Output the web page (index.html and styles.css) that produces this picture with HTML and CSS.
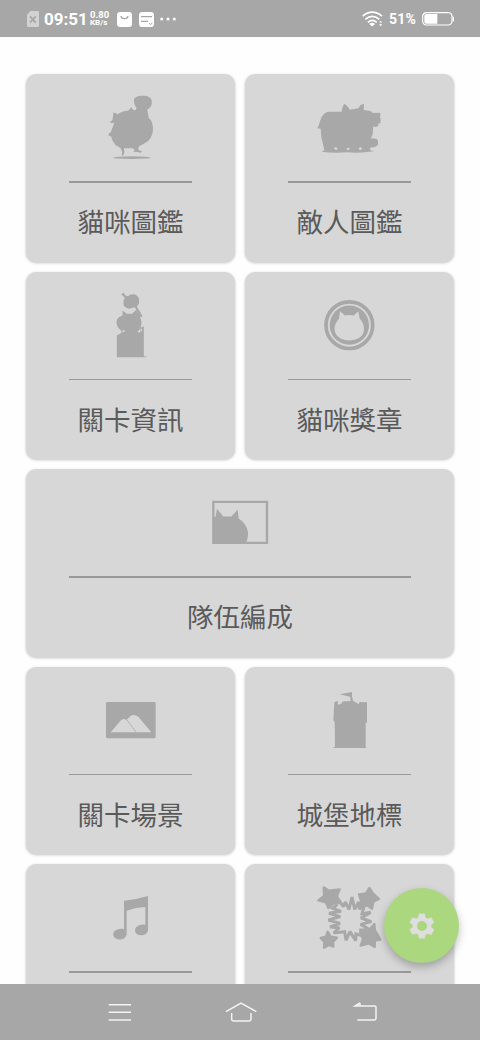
FILE: index.html
```html
<!DOCTYPE html>
<html lang="zh-Hant">
<head>
<meta charset="utf-8">
<title>貓咪圖鑑</title>
<link rel="stylesheet" href="styles.css">
</head>
<body>
<div class="phone">
  <header class="status">
    <svg class="sim" viewBox="0 0 36 48"><path d="M10 0H32Q36 0 36 4V44Q36 48 32 48H4Q0 48 0 44V11Z" fill="#d2d2d2"/><path d="M9 16L26 35M26 16L9 35" stroke="#a7a7a7" stroke-width="5"/></svg>
    <span class="time">09:51</span>
    <span class="rate"><span>0.80</span><span>KB/s</span></span>
    <svg class="bag" viewBox="0 0 45 45"><rect width="45" height="45" rx="9" fill="#fff"/><path d="M12 12Q13 20 22.500 20T33 12" fill="none" stroke="#a7a7a7" stroke-width="4"/></svg>
    <svg class="note" viewBox="0 0 45 45"><rect width="45" height="45" rx="10" fill="#fff"/><path d="M6 14H39M6 28H27" stroke="#a7a7a7" stroke-width="4"/><path d="M30 33L35 38L40 32" fill="none" stroke="#a7a7a7" stroke-width="3"/></svg>
    <svg class="dots" viewBox="0 0 48 12" fill="#fff"><circle cx="5" cy="6" r="4.500"/><circle cx="24" cy="6" r="4.500"/><circle cx="43" cy="6" r="4.500"/></svg>
    <svg class="wifi" viewBox="0 0 64 48" fill="none" stroke="#fff" stroke-width="5"><path d="M2 15Q31-9 61 15M10 25Q31 7 53 25M18 34Q31 22 45 34"/><path d="M22 39Q31 32 40 39L31 47Z" fill="#fff" stroke="none"/><path d="M52 35L57 29L62 35ZM52 40L57 46L62 40Z" fill="#fff" stroke="none"/></svg>
    <span class="percent">51%</span>
    <svg class="battery" viewBox="0 0 96 42"><rect x="2" y="2" width="88" height="37" rx="11" fill="none" stroke="#fff" stroke-width="3.500"/><path d="M13 6H46V35H13Q7 35 7 29V12Q7 6 13 6Z" fill="#fff"/><path d="M94 14V28" stroke="#fff" stroke-width="4"/></svg>
  </header>

  <main class="grid">
    <a class="card">
      <svg class="icon" viewBox="1.500 1 240 252"><path d="M130 51C129 40 143 36 159 36C175 36 184 43 184 54C184 67 180 73 170 77L175 104L181 109C191 129 189 151 178 166C172 174 162 180 148 186L143 192L145 200L154 203L151 207L136 204L131 206L129 203L133 200L127 194L100 194L102 205L98 216L94 215L95 204L90 193L75 184L66 171L62 158L56 158L54 151L61 145L70 122L70 117L57 118L66 108L69 86L82 92Q97 80 113 81L123 71L129 80L136 79L138 72Q131 65 130 51Z"/><ellipse cx="124" cy="222" rx="56" ry="4"/></svg>
      <span class="rule"></span><span class="label">貓咪圖鑑</span>
    </a>
    <a class="card">
      <svg class="icon" viewBox="12 1 240 252"><path fill-rule="evenodd" d="M34 134Q40 124 43 110Q51 84 70 84H107L109 73L114 60Q125 64 131 78L157 74L164 64L174 60L173 79L193 82L201 88L222 87L224 94L221 98L224 106L223 119L216 120L218 127L207 130L202 128L200 152L195 164L211 165L216 171V183L207 190L192 192L193 200L204 203Q164 209 124 206Q79 209 47 204L55 200L51 182L46 161L44 135ZM88 191C81 192 84 200 94 198C95 192 91 191 88 191ZM123 193Q119 198 127 199Q134 197 130 193ZM161 191Q155 199 163 199Q171 196 165 191Z"/></svg>
      <span class="rule"></span><span class="label">敵人圖鑑</span>
    </a>
    <a class="card">
      <svg class="icon" viewBox="1.500 -6.500 240 252"><path d="M92 30L99 26L105 34L112 36Q121 28 134 31Q147 37 146 51Q147 61 139 67L148 82L156 96L152 99L148 97L153 111Q153 130 145 139L140 143L149 146L150 131L160 126V216L168 217V219H79V154L88 149L94 145L91 138Q78 130 78 113Q80 98 96 94V79L109 89H125L137 77L140 84L143 89L137 76L133 69L117 74Q102 71 99 62V49L103 41Z"/><path d="M99 136L95 144L104 142ZM154 132L150 141H155Z" fill="#d7d7d7"/></svg>
      <span class="rule"></span><span class="label">關卡資訊</span>
    </a>
    <a class="card">
      <svg class="icon" viewBox="0 -6.500 240 252"><circle cx="118" cy="123" r="70" fill="none" stroke="#a8a8a8" stroke-width="11"/><circle cx="118" cy="123" r="59"/><path d="M90 81Q98 86 104 94Q118 91 131 94L145 81L149 103Q163 118 162 137C160 160 140 169 117 169C92 168 75 156 74 136Q73 119 87 104Z" fill="#d7d7d7"/></svg>
      <span class="rule"></span><span class="label">貓咪獎章</span>
    </a>
    <a class="card wide">
      <svg class="icon" viewBox="0 -32.500 240 252"><path d="M40 36H201V159H40Z" fill="none" stroke="#a8a8a8" stroke-width="7"/><path d="M40 160V83L47 80L51 57L70 80H94L113 60L116 86Q140 101 144 127Q145 146 137 160Z"/></svg>
      <span class="rule"></span><span class="label">隊伍編成</span>
    </a>
    <a class="card">
      <svg class="icon" viewBox="3 -39 240 252"><rect x="48" y="36" width="149" height="109" rx="4"/><path d="M62 127L85 100Q98 81 109 90L121 79Q132 71 145 80L184 127Z" fill="#d7d7d7"/><path d="M109 88L138 126" stroke="#a8a8a8" stroke-width="3" stroke-dasharray="6 2"/></svg>
      <span class="rule"></span><span class="label">關卡場景</span>
    </a>
    <a class="card">
      <svg class="icon" viewBox="0 -9 240 252"><path d="M89 43L126 36V50L130 64L137 67L146 73L149 66L171 67V128H167V201L170 204H68L75 200L74 126L70 121L73 67L83 62L84 74L94 71L99 64H118L122 62L120 50Z"/></svg>
      <span class="rule"></span><span class="label">城堡地標</span>
    </a>
    <a class="card">
      <svg class="icon" viewBox="3 -19 240 252"><path d="M102 61Q138 58 174 47V151C171 162 158 166 148 164C136 163 132 152 138 141Q148 130 166 133V80Q137 81 110 91V161C108 174 96 179 83 177C71 174 66 163 73 153Q82 143 102 146Z"/></svg>
      <span class="rule"></span>
    </a>
    <a class="card">
      <svg class="icon" viewBox="12 -7 240 252"><g stroke="#a8a8a8" stroke-width="7" stroke-linejoin="round"><path d="M53 33L69 43L101 39L93 59L101 80L83 81L67 95L60 78L37 72L54 59ZM190 35L200 50L219 68L202 76L198 97L183 87L160 94L165 73L159 54L180 51ZM65 166L74 181L93 184L81 197L82 211L69 206L54 214L55 197L44 185L60 181ZM205 143L207 162L223 190L207 193L206 212L188 201L164 208L171 189L162 166L184 167Z"/><path d="M95 66L112 91L118 77L129 99L138 62L146 99L158 77L160 98L176 84L168 112L194 108L165 125L196 136L164 144L188 158L165 161L176 180L150 173L149 193L132 166L120 192L116 166L83 170L100 154L72 152L102 141L67 131L103 121L69 111L105 105L80 96L94 84" fill="none" stroke-width="9" stroke-linejoin="miter" stroke-miterlimit="2"/></g></svg>
      <span class="rule"></span>
    </a>
  </main>

  <button class="fab" aria-label="設定"><svg viewBox="0 0 24 24"><path fill-rule="evenodd" d="M19.400 13a7.700 7.700 0 0 0 0-2l2.100-1.600a.5.5 0 0 0 .1-.6l-2-3.500a.5.5 0 0 0-.6-.2l-2.500 1a7.500 7.500 0 0 0-1.700-1l-.4-2.700a.5.5 0 0 0-.5-.4h-4a.5.5 0 0 0-.5.4L9 5.100a7.500 7.500 0 0 0-1.700 1l-2.500-1a.5.5 0 0 0-.6.2l-2 3.500a.5.5 0 0 0 .1.600L4.500 11a7.700 7.700 0 0 0 0 2l-2.200 1.600a.5.5 0 0 0-.1.600l2 3.500a.5.5 0 0 0 .6.200l2.500-1a7.500 7.500 0 0 0 1.700 1l.4 2.700a.5.5 0 0 0 .5.400h4a.5.5 0 0 0 .5-.4l.4-2.700a7.500 7.500 0 0 0 1.700-1l2.500 1a.5.5 0 0 0 .6-.2l2-3.500a.5.5 0 0 0-.1-.6ZM12 16a4 4 0 1 1 0-8a4 4 0 0 1 0 8Z"/></svg></button>

  <nav class="navbar">
    <svg viewBox="0 0 96 60"><path d="M14 8H81M14 31H81M14 54H81"/></svg>
    <svg class="home" viewBox="0 0 96 60"><path d="M3 29L48 3L94 29M20 33V52Q20 57 25 57H73Q78 57 78 52V33"/></svg>
    <svg class="back" viewBox="0 0 96 60"><path d="M30 3V11M30 3L15 12H74Q78 12 78 16V49Q78 54 73 54H22"/></svg>
  </nav>
</div>
</body>
</html>
```
FILE: styles.css
```css
* { box-sizing: border-box; }
body { margin: 0; background: #fefefe; }
.phone {
  position: relative;
  width: 480px;
  height: 1040px;
  overflow: hidden;
  display: flex;
  flex-direction: column;
  font-family: Roboto, "Noto Sans CJK TC", sans-serif;
}
.status {
  flex: 0 0 37px;
  display: flex;
  align-items: center;
  padding: 1px 26px 0 27px;
  background: #a7a7a7;
  color: #fff;
  font-weight: 700;
}
.status svg { flex: none; }
.sim { width: 12px; height: 16px; }
.time { width: 44px; margin-left: 5px; font-size: 17px; line-height: 20px; }
.rate {
  display: flex;
  flex-direction: column;
  width: 20px;
  margin-left: 2px;
  font-size: 9.5px;
  line-height: 8.5px;
}
.rate span:last-child { font-size: 8px; }
.bag { width: 15px; height: 15px; margin-left: 7px; }
.note { width: 15px; height: 15px; margin-left: 7px; }
.dots { width: 16px; height: 4px; margin-left: 6px; }
.wifi { width: 21px; height: 16px; margin-left: auto; }
.percent { width: 28px; margin-left: 6px; font-size: 14px; letter-spacing: .2px; }
.battery { width: 32px; height: 14px; margin-left: 5px; }
.grid {
  flex: 1;
  min-height: 0;
  overflow: hidden;
  display: grid;
  grid-template-columns: 1fr 1fr;
  grid-auto-rows: 187.5px;
  gap: 10px;
  padding: 37px 26px 0;
}
.card {
  display: flex;
  flex-direction: column;
  align-items: center;
  padding: 10px 43px 0;
  border-radius: 10px;
  background: #d7d7d7;
  box-shadow: 0 1px 3px rgba(0, 0, 0, .24);
}
.wide { grid-column: span 2; }
.icon { flex: none; width: 80px; height: 84px; fill: #a8a8a8; }
.rule { flex: none; width: 100%; height: 1.5px; margin-top: 13px; background: #999; }
.label {
  margin-top: 18.5px;
  color: #5a5a5a;
  font: 400 26.5px/40px "Noto Sans CJK TC", sans-serif;
  white-space: nowrap;
}
.fab {
  position: absolute;
  left: 384px;
  top: 888px;
  width: 75px;
  height: 75px;
  display: grid;
  place-items: center;
  padding: 0;
  border: 0;
  border-radius: 50%;
  background: #abd77e;
  box-shadow: 0 4px 9px rgba(0, 0, 0, .26);
}
.fab svg { width: 30px; height: 30px; fill: #dedede; }
.navbar {
  flex: 0 0 56px;
  display: flex;
  align-items: center;
  padding-left: 104px;
  background: #a7a7a7;
  z-index: 1;
}
.navbar svg { width: 32px; height: 20px; fill: none; stroke: #f4f4f4; stroke-width: 4.5; }
.navbar .home { margin-left: 88.5px; }
.navbar .back { margin-left: 93.5px; }
```
